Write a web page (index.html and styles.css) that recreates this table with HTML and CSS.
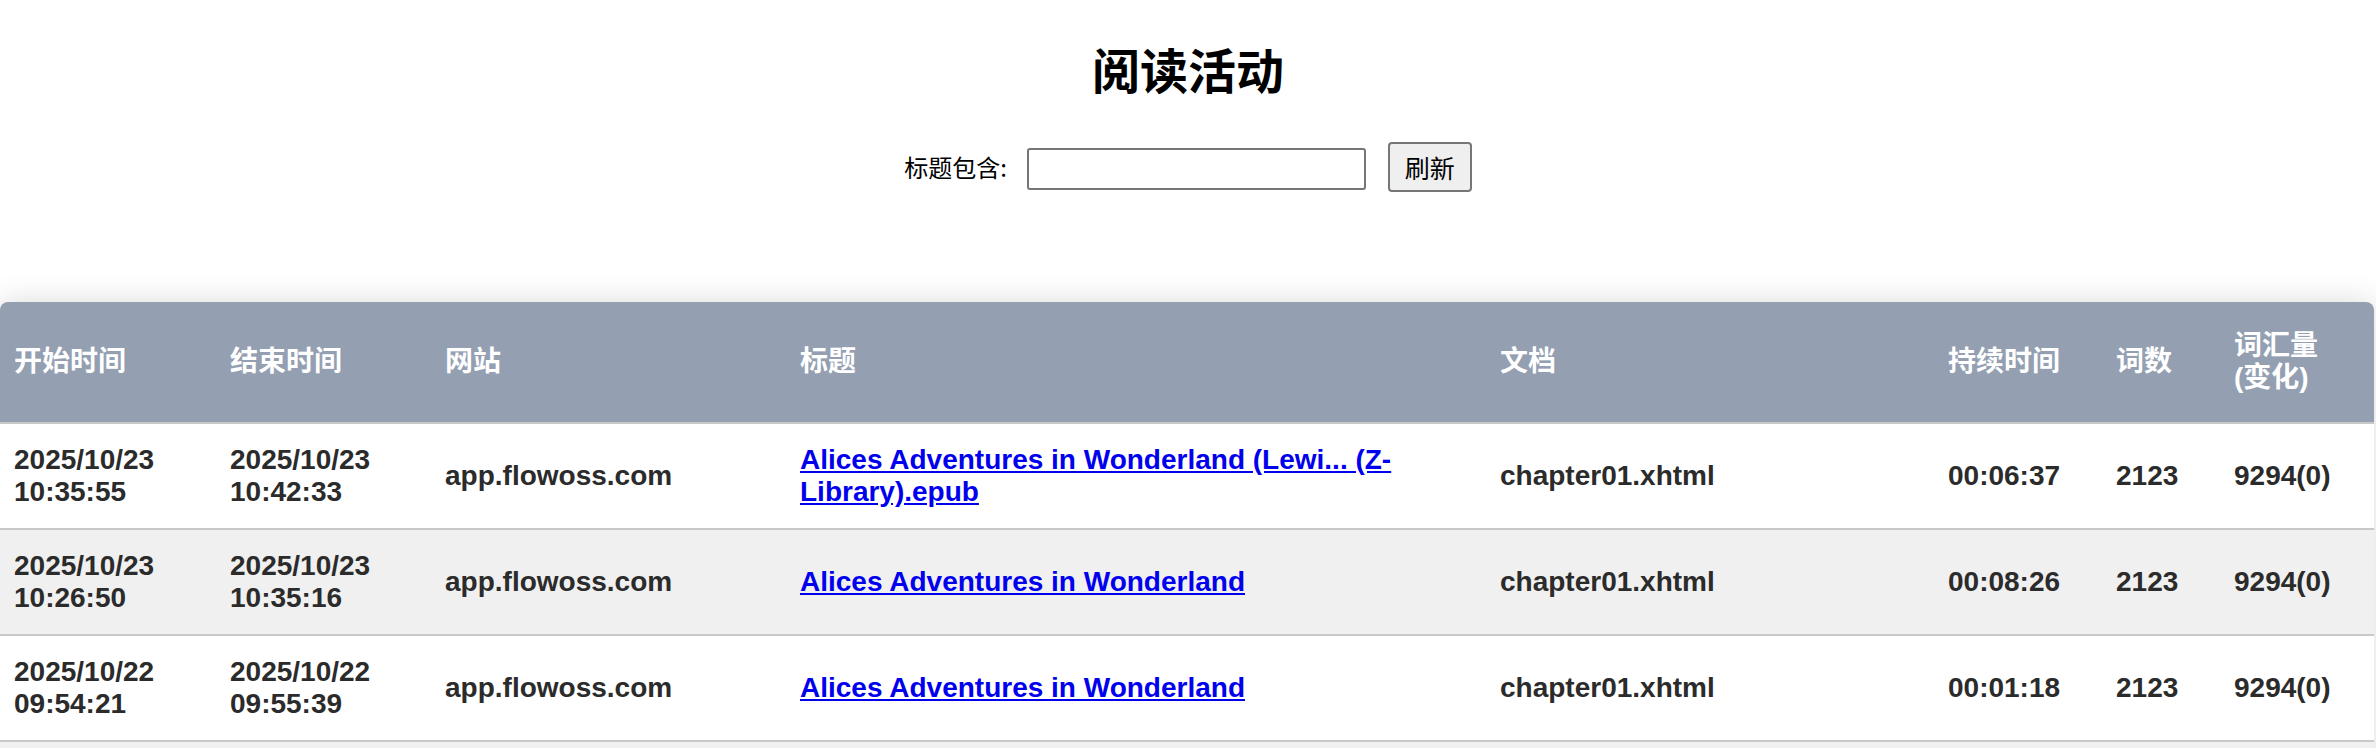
FILE: index.html
```html
<!DOCTYPE html>
<html lang="zh-CN">
<head>
<meta charset="utf-8">
<title>阅读活动</title>
<link rel="stylesheet" href="styles.css">
</head>
<body>
<header class="page-head">
  <h1 class="title">阅读活动</h1>
  <form class="filter">
    <label class="filter-label" for="q">标题包含:</label>
    <input class="filter-input" id="q" type="text">
    <button class="filter-btn" type="button">刷新</button>
  </form>
</header>
<div class="table-wrap">
  <table class="activity">
    <colgroup>
      <col class="c-start"><col class="c-end"><col class="c-site"><col class="c-title"><col class="c-doc"><col class="c-dur"><col class="c-words"><col class="c-vocab">
    </colgroup>
    <thead>
      <tr>
        <th>开始时间</th>
        <th>结束时间</th>
        <th>网站</th>
        <th>标题</th>
        <th>文档</th>
        <th>持续时间</th>
        <th>词数</th>
        <th>词汇量<br>(变化)</th>
      </tr>
    </thead>
    <tbody>
      <tr>
        <td>2025/10/23<br>10:35:55</td>
        <td>2025/10/23<br>10:42:33</td>
        <td>app.flowoss.com</td>
        <td><a href="#">Alices Adventures in Wonderland (Lewi... (Z-Library).epub</a></td>
        <td>chapter01.xhtml</td>
        <td>00:06:37</td>
        <td>2123</td>
        <td>9294(0)</td>
      </tr>
      <tr>
        <td>2025/10/23<br>10:26:50</td>
        <td>2025/10/23<br>10:35:16</td>
        <td>app.flowoss.com</td>
        <td><a href="#">Alices Adventures in Wonderland</a></td>
        <td>chapter01.xhtml</td>
        <td>00:08:26</td>
        <td>2123</td>
        <td>9294(0)</td>
      </tr>
      <tr>
        <td>2025/10/22<br>09:54:21</td>
        <td>2025/10/22<br>09:55:39</td>
        <td>app.flowoss.com</td>
        <td><a href="#">Alices Adventures in Wonderland</a></td>
        <td>chapter01.xhtml</td>
        <td>00:01:18</td>
        <td>2123</td>
        <td>9294(0)</td>
      </tr>
      <tr class="row-more">
        <td colspan="8"></td>
      </tr>
    </tbody>
  </table>
</div>
</body>
</html>
```

FILE: styles.css
```css
html, body {
  margin: 0;
  padding: 0;
  background: #ffffff;
}

body {
  font-family: "Liberation Sans", "Noto Sans CJK SC", sans-serif;
  color: #000;
}

.page-head {
  display: flex;
  flex-direction: column;
  align-items: center;
  padding-top: 39px;
}

.title {
  margin: 0;
  font-family: "Noto Sans CJK SC", sans-serif;
  font-weight: 700;
  font-size: 48px;
  line-height: 58px;
}

.filter {
  display: flex;
  align-items: center;
  margin-top: 45px;
}

.filter-label {
  font-family: "Noto Sans CJK SC", sans-serif;
  font-size: 24px;
  line-height: 32px;
  margin-right: 20px;
}

.filter-input {
  box-sizing: border-box;
  width: 339px;
  height: 42px;
  border: 2px solid #767676;
  border-radius: 3px;
  background: #fff;
  padding: 2px 6px;
  font-size: 24px;
  margin: 3px 22px 0 0;
}

.filter-btn {
  box-sizing: border-box;
  width: 84px;
  height: 50px;
  border: 2px solid #767676;
  border-radius: 4px;
  background: #efefef;
  font-family: "Noto Sans CJK SC", sans-serif;
  font-size: 25px;
  line-height: 32px;
  color: #000;
  padding: 0;
}

.table-wrap {
  margin-top: 110px;
  width: calc(100% - 2px);
  border-radius: 8px 8px 0 0;
  overflow: hidden;
  box-shadow: 0 0 30px rgba(0, 0, 0, 0.15);
}

.activity {
  width: 100%;
  table-layout: fixed;
  border-collapse: separate;
  border-spacing: 0;
  font-family: "Liberation Sans", "Noto Sans CJK SC", sans-serif;
  font-size: 28px;
  font-weight: 700;
  line-height: 32px;
  color: #2b2b2b;
}

.c-start { width: 216px; }
.c-end { width: 215px; }
.c-site { width: 355px; }
.c-title { width: 700px; }
.c-doc { width: 448px; }
.c-dur { width: 168px; }
.c-words { width: 118px; }
.c-vocab { width: 154px; }

.activity th {
  background: #94a0b2;
  color: #ffffff;
  text-align: left;
  padding: 28px 14px;
  border-bottom: 2px solid #c8c8c8;
  font-weight: 700;
  vertical-align: middle;
}

.activity td {
  padding: 20px 14px;
  border-bottom: 2px solid #c8c8c8;
  vertical-align: middle;
  background: #ffffff;
}

.activity tbody tr:nth-child(even) td {
  background: #f0f0f0;
}

.activity .row-more td {
  height: 64px;
}

.activity a {
  color: #0000ee;
  text-decoration: underline;
}
```
